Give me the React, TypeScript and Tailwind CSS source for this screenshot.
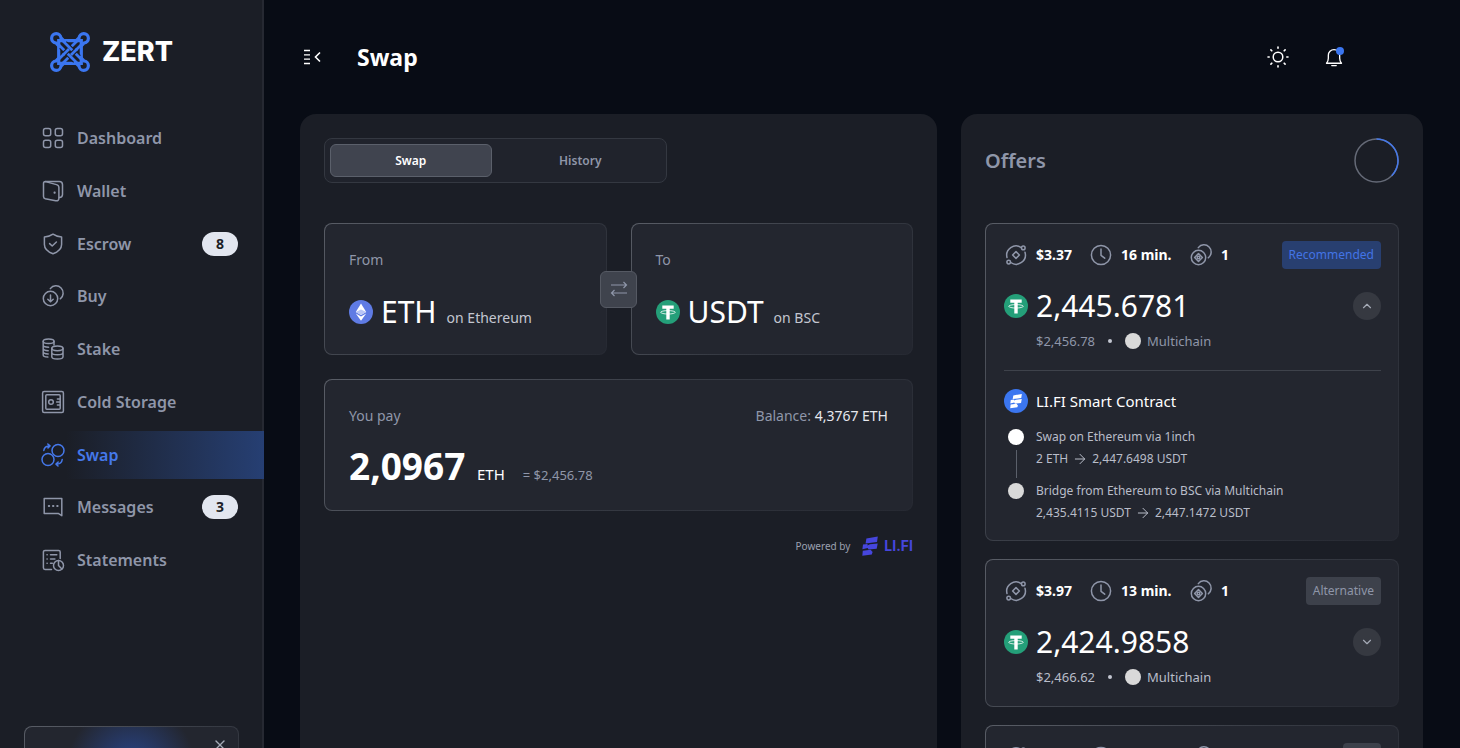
/**
 * Swap screen: sidebar, header, swap form and the list of offers
 */

import { useState } from 'react'
import type { ReactNode } from 'react'
import { ArrowRight, ChevronDown, ChevronUp, X } from 'lucide-react'

interface IconProps {
  children:   ReactNode
  className?: string
}

// Shared frame for the 24px line icons
function LineIcon({ children, className = 'w-6 h-6' }: IconProps) {
  return (
    <svg
      viewBox="0 0 24 24"
      fill="none"
      stroke="currentColor"
      strokeWidth="1.5"
      strokeLinecap="round"
      strokeLinejoin="round"
      aria-hidden="true"
      className={`shrink-0 ${className}`}
    >
      {children}
    </svg>
  )
}

const DashboardIcon = () => (
  <LineIcon>
    <rect x="2.5" y="2.5" width="7.2" height="7.2" rx="2" />
    <rect x="14.3" y="2.5" width="7.2" height="7.2" rx="2" />
    <rect x="2.5" y="14.3" width="7.2" height="7.2" rx="2" />
    <rect x="14.3" y="14.3" width="7.2" height="7.2" rx="2" />
  </LineIcon>
)

const WalletIcon = () => (
  <LineIcon>
    <path d="M4.5 2.6h13.8a3.2 3.2 0 0 1 3.2 3.2v9.6c0 1.8-1.2 3-3.2 3.2" />
    <path d="M4.5 2.6c-1.2 0-2 .9-2 2v12.8c0 1.3.7 2 1.8 2.3l10.4 2c2 .4 3.2-.6 3.2-2.4V8.6c0-1.6-.9-2.6-2.4-3L4.500 2.600Z" />
    <path d="M13.300 13.300h.6v.6h-.6z" />
  </LineIcon>
)

const ShieldIcon = () => (
  <LineIcon>
    <path d="M12 2.200c2.400 1.800 5.200 2.600 8.600 2.700v7.600c0 4.300-3.300 7.300-8.600 9.300-5.300-2-8.600-5-8.600-9.300V4.900c3.400-.1 6.200-.9 8.600-2.700Z" />
    <path d="m8.600 11.600 2.600 2.400 4.200-4" />
  </LineIcon>
)

const BuyIcon = () => (
  <LineIcon>
    <circle cx="9.500" cy="14.500" r="7.200" />
    <path d="M9.500 11v6.600M6.800 15.200l2.700 2.500 2.700-2.500" />
    <path d="M9.300 4.600a7.200 7.200 0 1 1 10 10.200" />
  </LineIcon>
)

const StakeIcon = () => (
  <LineIcon>
    <ellipse cx="7.600" cy="4.300" rx="5.400" ry="2.300" />
    <path d="M2.200 4.300v13.600c0 1.200 2 2 4.600 2.200M13 4.300v3.600M2.200 8c0 1.300 2.300 2.200 5.400 2.200M2.200 11.500c0 1.200 2.100 2.100 5 2.200M2.200 14.800c0 1.200 2.100 2.100 5 2.200" />
    <ellipse cx="16.400" cy="11.300" rx="5.600" ry="2.400" />
    <path d="M10.800 11.300v8.500c0 1.300 2.500 2.300 5.600 2.300s5.600-1 5.600-2.300v-8.500M10.800 15.500c0 1.300 2.500 2.300 5.600 2.300s5.600-1 5.600-2.300" />
  </LineIcon>
)

const SafeIcon = () => (
  <LineIcon>
    <rect x="1.600" y="1.600" width="20.800" height="20.800" rx="1.500" />
    <rect x="4.800" y="4.800" width="14.400" height="14.400" rx="1" />
    <circle cx="10" cy="12" r="2.300" />
    <path d="M16.400 9h2.800M15.600 12h3.600M16.400 15h2.800" />
  </LineIcon>
)

const SwapIcon = () => (
  <LineIcon>
    <circle cx="7" cy="16.500" r="6" />
    <circle cx="17" cy="7.500" r="6" />
    <path d="M2.800 7.500c.3-3 2.300-4.600 6-4.600M6.800 1l2.200 1.900-2 2" />
    <path d="M21.200 16.500c-.3 3-2.300 4.600-6 4.600M17.200 19l-2.200 2.100 2 1.900" />
  </LineIcon>
)

const MessageIcon = () => (
  <LineIcon>
    <path d="M3.200 3.500h17.600v17.200l-3.600-2.300h-14z" />
    <path d="M7.800 11h.4M12 11h.4M16.200 11h.4" strokeWidth="2" />
  </LineIcon>
)

const StatementIcon = () => (
  <LineIcon>
    <path d="M10.500 21.400H4a1.600 1.600 0 0 1-1.600-1.600V4A1.600 1.600 0 0 1 4 2.400h13.600a1.600 1.600 0 0 1 1.600 1.600v6.400" />
    <path d="M9.500 6.800h6.300M9.500 11h4.400M9.500 15.200h1.800M6 6.800h.2M6 11h.2M6 15.200h.2" />
    <circle cx="17.500" cy="17.500" r="5" />
    <path d="M17.500 12.600v4.900l3.400 3.500" />
  </LineIcon>
)

const GasIcon = () => (
  <LineIcon>
    <path d="M17.300 4.600A9.300 9.300 0 0 0 3 14.500M21 9.300A9.300 9.300 0 0 1 6.700 19.500" />
    <circle cx="19.300" cy="4.900" r="1.800" />
    <circle cx="4.700" cy="19.100" r="1.800" />
    <path d="m12 8.600 3.400 3.400-3.400 3.400L8.600 12z" />
  </LineIcon>
)

const ClockIcon = () => (
  <LineIcon>
    <circle cx="12" cy="12" r="9.600" />
    <path d="M12 6v6.300l3.700 2.900" />
  </LineIcon>
)

const StepsIcon = () => (
  <LineIcon>
    <circle cx="9.500" cy="14.500" r="7.200" />
    <path d="m9.500 10.600 3.900 3.900-3.900 3.900-3.900-3.900z" />
    <circle cx="9.500" cy="14.500" r="1.300" />
    <path d="M9.300 4.600a7.200 7.200 0 1 1 10 10.200" />
  </LineIcon>
)

// Two pairs of woven diagonals, tied together by a loop at each corner
const Logo = () => (
  <svg viewBox="0 0 40 40" fill="none" className="w-10 h-10 shrink-0" aria-hidden="true">
    <g stroke="#3b76f0" strokeWidth="3.200">
      <path d="M8.700 8.700h22.600v22.600H8.700z" />
      <path d="M26 9l3-3a4.700 4.700 0 1 1 5 5L31 14" />
      <path d="M14 9 11 6a4.700 4.700 0 1 0-5 5L9 14" />
      <path d="M26 31l3 3a4.700 4.700 0 1 0 5-5L31 26" />
      <path d="M14 31l-3 3a4.700 4.700 0 1 1-5-5L9 26" />
      <path d="M27 9 9 27M31 13 13 31" strokeWidth="2.800" />
    </g>
    <path d="m15 11 14 14M11 15l14 14" stroke="#1b1e26" strokeWidth="5" />
    <path d="m13 9 18 18M9 13l18 18" stroke="#3b76f0" strokeWidth="2.800" />
    <path d="m18 18-4 4M26 18l-4 4" stroke="#1b1e26" strokeWidth="5" />
    <path d="m19 17-6 6M27 17l-6 6" stroke="#3b76f0" strokeWidth="2.800" />
  </svg>
)

const LifiMark = ({ className }: { className: string }) => (
  <svg viewBox="0 0 16 20" fill="currentColor" className={className} aria-hidden="true">
    <path d="M4.400 2.600 15.800.5 15 6 3.600 7.400z" />
    <path d="M1 8.500 5.600 8 5.400 9.400 8 8.300l7.700-.9-1 5.300-8.200.9-.8-1.500L.4 13.200z" />
    <path d="M.8 14.800l7.800-1 2 2.200L9.800 18.400.3 19.800z" />
  </svg>
)

const EthIcon = () => (
  <svg viewBox="0 0 24 24" className="w-6 h-6 shrink-0" aria-hidden="true">
    <circle cx="12" cy="12" r="12" fill="#5f7be4" />
    <path d="m12 3.500 5.200 8.500L12 15 6.800 12z" fill="#fff" />
    <path d="m12 9.600 5.200 2.400L12 15 6.800 12z" fill="#b9c6f6" />
    <path d="m6.800 13.500 5.200 3 5.200-3L12 20.700z" fill="#fff" />
  </svg>
)

const UsdtIcon = () => (
  <svg viewBox="0 0 24 24" className="w-6 h-6 shrink-0" aria-hidden="true">
    <circle cx="12" cy="12" r="12" fill="#249f79" />
    <path d="M6.300 5.500h11.400v3.200h-4v10.800h-3.400V8.700h-4z" fill="#fff" />
    <ellipse cx="12" cy="12.300" rx="7.300" ry="1.700" fill="none" stroke="#fff" strokeWidth=".8" />
  </svg>
)

interface NavItem {
  label:   string
  Icon:    () => ReactNode
  count?:  number
}

const NAV_ITEMS: NavItem[] = [
  { label: 'Dashboard',    Icon: DashboardIcon },
  { label: 'Wallet',       Icon: WalletIcon },
  { label: 'Escrow',       Icon: ShieldIcon, count: 8 },
  { label: 'Buy',          Icon: BuyIcon },
  { label: 'Stake',        Icon: StakeIcon },
  { label: 'Cold Storage', Icon: SafeIcon },
  { label: 'Swap',         Icon: SwapIcon },
  { label: 'Messages',     Icon: MessageIcon, count: 3 },
  { label: 'Statements',   Icon: StatementIcon },
]

interface Step {
  title: string
  from:  string
  to:    string
  dot:   string
}

interface OfferData {
  fee:    string
  time:   string
  steps:  number
  tag:    string
  amount: string
  usd:    string
  route?: Step[]
}

const OFFERS: OfferData[] = [
  {
    fee: '$3.37', time: '16 min.', steps: 1, tag: 'Recommended', amount: '2,445.6781', usd: '$2,456.78',
    route: [
      { title: 'Swap on Ethereum via 1inch', from: '2 ETH', to: '2,447.6498 USDT', dot: 'bg-white' },
      { title: 'Bridge from Ethereum to BSC via Multichain', from: '2,435.4115 USDT', to: '2,447.1472 USDT', dot: 'bg-[#d9d9d9]' },
    ],
  },
  { fee: '$3.97', time: '13 min.', steps: 1, tag: 'Alternative', amount: '2,424.9858', usd: '$2,466.62' },
]

// Card face with a border that fades towards the bottom right
const CARD = 'rounded-lg border border-transparent [background:linear-gradient(#23262f,#23262f)_padding-box,linear-gradient(135deg,#595d66,#373b44_50%,#262932)_border-box]'

function Sidebar() {
  return (
    <aside className="w-66 shrink-0 bg-[#1b1e26] border-r-2 border-[#262932] flex flex-col">
      <a href="#home" className="flex items-center gap-3 pl-[50px] pt-8">
        <Logo />
        <span className="font-['Inter',sans-serif] text-[27px] leading-10 font-extrabold text-white">ZERT</span>
      </a>

      <nav className="mt-[42px] h-[470px] shrink-0 flex flex-col justify-between">
        {NAV_ITEMS.map(({ label, Icon, count }) => {
          const active = label === 'Swap'
          return (
            <a
              key={label}
              href={`#${label}`}
              className={`h-12 flex items-center gap-3 pl-[41px] pr-6 text-base font-semibold ${
                active
                  ? 'text-[#4578ea] -mr-0.5 bg-linear-to-r from-transparent from-25% to-[#263f73]'
                  : 'text-[#8f96a9]'
              }`}
            >
              <Icon />
              {label}
              {count && (
                <span className="ml-auto w-9 h-6 rounded-full bg-[#e2e6ef] text-[#1b1e26] text-sm font-bold flex items-center justify-center">
                  {count}
                </span>
              )}
            </a>
          )
        })}
      </nav>

      <div className="mt-[142px] ml-6 mr-[23px] h-40 shrink-0 rounded-lg border border-transparent flex justify-end items-start p-2.5 [background:radial-gradient(circle_at_50%_40px,#29468c,transparent_64px)_padding-box,linear-gradient(#23262f,#23262f)_padding-box,linear-gradient(135deg,#595d66,#373b44_50%,#262932)_border-box]">
        <button aria-label="Close" className="text-[#a5aab6]">
          <X className="w-4 h-4" strokeWidth={2} />
        </button>
      </div>
    </aside>
  )
}

function Header() {
  return (
    <header className="h-[114px] shrink-0 flex items-center text-white pl-1 pr-[79px]">
      <button aria-label="Collapse menu">
        <svg viewBox="0 0 18 16" fill="none" stroke="currentColor" className="w-[18px] h-4">
          <path d="M0 1.500h6M0 5.800h6M0 10.200h6M0 14.500h6" strokeWidth="1.300" />
          <path d="m16 3.500-4.500 4.500 4.500 4.500" strokeWidth="1.600" />
        </svg>
      </button>
      <h1 className="ml-[35px] text-[23px] leading-8 font-bold">Swap</h1>
      <div className="ml-auto flex items-center gap-[34px]">
        <button aria-label="Theme">
          <LineIcon>
            <circle cx="12" cy="12" r="4.800" />
            <path d="M12 2v1.200M12 20.800V22M2 12h1.200M20.800 12H22M4.900 4.900l.9.9M18.200 18.200l.9.9M4.900 19.100l.9-.9M18.200 5.800l.9-.9" strokeWidth="1.600" />
          </LineIcon>
        </button>
        <button aria-label="Notifications" className="relative">
          <LineIcon className="w-5 h-6">
            <path d="M3 19.500h18c-1.500-1.700-2.200-3.300-2.200-6V10a6.800 6.800 0 0 0-13.600 0v3.500c0 2.700-.7 4.300-2.200 6ZM9.300 22.300h5.400" strokeWidth="1.600" />
          </LineIcon>
          <span className="absolute top-0.5 right-0 w-2 h-2 rounded-full bg-[#3b76f0]" />
        </button>
      </div>
    </header>
  )
}

function SwapForm() {
  const [tab, setTab]       = useState('Swap')
  const [amount, setAmount] = useState('2,0967')

  return (
    <section className="flex-1 min-w-0 rounded-t-2xl bg-[#1b1e26] p-6">
      <div role="tablist" className="w-[343px] max-w-full h-[45px] p-[5px] grid grid-cols-2 gap-2 rounded-lg border border-[#343841] bg-[#20232c]">
        {['Swap', 'History'].map(name => (
          <button
            key={name}
            role="tab"
            aria-selected={tab === name}
            onClick={() => setTab(name)}
            className={`rounded-md border text-xs font-semibold ${
              tab === name
                ? 'bg-[#40444f] border-[#5b606b] text-white'
                : 'border-transparent text-[#8f96a9]'
            }`}
          >
            {name}
          </button>
        ))}
      </div>

      <div className="relative mt-10 grid grid-cols-2 gap-6">
        <div className={`${CARD} h-[132px] px-6 pt-6`}>
          <p className="text-sm leading-6 text-[#8f96a9]">From</p>
          <div className="mt-5 flex items-center gap-2">
            <EthIcon />
            <p className="flex items-baseline gap-2.5 text-[30px] leading-10 text-white">
              ETH <span className="text-sm text-[#c3c7d1]">on Ethereum</span>
            </p>
          </div>
        </div>
        <div className={`${CARD} h-[132px] px-6 pt-6`}>
          <p className="text-sm leading-6 text-[#8f96a9]">To</p>
          <div className="mt-5 flex items-center gap-2">
            <UsdtIcon />
            <p className="flex items-baseline gap-2.5 text-[30px] leading-10 text-white">
              USDT <span className="text-sm text-[#c3c7d1]">on BSC</span>
            </p>
          </div>
        </div>
        <button
          aria-label="Switch direction"
          className="absolute inset-0 m-auto w-[37px] h-[37px] rounded-md border border-[#555963] bg-[#3f434d] text-[#8f96a9] flex items-center justify-center"
        >
          <svg viewBox="0 0 18 16" fill="none" stroke="currentColor" strokeWidth="1.200" className="w-[18px] h-4">
            <path d="M1 4h15.500M13.500 1l3 3-3 3M17 12H1.500M4.500 9l-3 3 3 3" />
          </svg>
        </button>
      </div>

      <div className={`${CARD} mt-6 h-[132px] px-6 pt-6`}>
        <div className="flex justify-between text-sm leading-6 text-[#8f96a9]">
          <label htmlFor="pay">You pay</label>
          <p>Balance: <span className="text-[#e6e8ee]">4,3767 ETH</span></p>
        </div>
        <div className="mt-3 flex items-baseline text-[#8f96a9]">
          <input
            id="pay"
            value={amount}
            onChange={e => setAmount(e.target.value)}
            className="w-[118px] bg-transparent text-[37px] leading-[52px] font-bold text-white outline-none"
          />
          <span className="ml-2.5 text-[15px] text-white">ETH</span>
          <span className="ml-[18px] text-[13px]">= $2,456.78</span>
        </div>
      </div>

      <p className="mt-[25px] flex items-center justify-end text-[10px] text-[#9ba1b0]">
        Powered by
        <LifiMark className="ml-3 mr-1.5 w-4 h-5 text-[#4646dd]" />
        <span className="font-['Inter',sans-serif] text-sm font-bold text-[#4646dd]">LI.FI</span>
      </p>
    </section>
  )
}

function Offer({ offer }: { offer: OfferData }) {
  const [open, setOpen] = useState(Boolean(offer.route))
  const best  = offer.tag === 'Recommended'
  const muted = best ? 'text-[#8f96a9]' : 'text-[#b9bdc9]'

  return (
    <article className={`${CARD} shrink-0 pl-[18px] pr-[17px] pt-[17px] ${open ? 'pb-[18px]' : 'pb-5'}`}>
      <div className="flex items-center text-sm font-bold text-white">
        <span className="w-[85px] flex items-center gap-2"><i className="text-[#8f96a9]"><GasIcon /></i>{offer.fee}</span>
        <span className="w-[100px] flex items-center gap-2"><i className="text-[#8f96a9]"><ClockIcon /></i>{offer.time}</span>
        <span className="flex items-center gap-2"><i className="text-[#8f96a9]"><StepsIcon /></i>{offer.steps}</span>
        <span className={`ml-auto h-7 px-[7px] rounded text-xs font-normal flex items-center ${
          best ? 'bg-[#283f70] text-[#4374e6]' : 'bg-[#3d414b] text-[#8f96a9]'
        }`}
        >
          {offer.tag}
        </span>
      </div>

      <div className="mt-[17px] flex items-center gap-2">
        <UsdtIcon />
        <p className="text-[30px] leading-10 text-white">{offer.amount}</p>
        <button
          aria-label="Toggle details"
          onClick={() => setOpen(o => !o)}
          className="ml-auto w-7 h-7 rounded-full bg-[#363941] text-[#a5aab6] flex items-center justify-center"
        >
          {open ? <ChevronUp className="w-3.5 h-3.5" /> : <ChevronDown className="w-3.5 h-3.5" />}
        </button>
      </div>

      <p className={`mt-1.5 pl-8 flex items-center text-[13px] leading-[18px] ${muted}`}>
        {offer.usd}
        <span className="mx-[13px] w-1 h-1 rounded-full bg-[#c3c7d1]" />
        <span className="mr-1.5 w-4 h-4 rounded-full bg-[#d9d9d9]" />
        Multichain
      </p>

      {open && offer.route && (
        <div className="mt-5 border-t border-[#3e424b] pt-[18px]">
          <div className="flex items-center gap-2 text-[15px] leading-6 text-white">
            <span className="w-6 h-6 rounded-full bg-[#3b76f0] flex items-center justify-center">
              <LifiMark className="w-3 h-4" />
            </span>
            LI.FI Smart Contract
          </div>
          <ol className="mt-[15px] flex flex-col gap-3.5 text-xs leading-[18px] text-[#b9bdc9]">
            {offer.route.map((step, i) => (
              <li key={step.title} className="relative flex gap-3 pl-1">
                <span className={`mt-px w-4 h-4 shrink-0 rounded-full ${step.dot}`} />
                {i < offer.route!.length - 1 && (
                  <span className="absolute left-3 top-[22px] w-px h-7 bg-[#5b606b]" />
                )}
                <div>
                  <p>{step.title}</p>
                  <p className="mt-1 flex items-center gap-1">
                    {step.from}
                    <ArrowRight className="w-4 h-4" strokeWidth={1.5} />
                    {step.to}
                  </p>
                </div>
              </li>
            ))}
          </ol>
        </div>
      )}
    </article>
  )
}

// Placeholder for the offer that is still loading below the fold
function PendingOffer() {
  return (
    <article className={`${CARD} h-[148px] shrink-0 pl-[18px] pr-[17px] pt-[17px]`}>
      <div className="flex items-center text-[#8f96a9]">
        <span className="w-[85px]"><GasIcon /></span>
        <span className="w-[100px]"><ClockIcon /></span>
        <StepsIcon />
        <span className="ml-auto w-[38px] h-7 rounded bg-[#3d414b]" />
      </div>
    </article>
  )
}

function Offers() {
  return (
    <section className="w-[462px] shrink-0 rounded-t-2xl bg-[#1b1e26] px-6 pt-6 flex flex-col">
      <div className="flex items-center justify-between">
        <h2 className="text-xl font-semibold text-[#8f96a9]">Offers</h2>
        <svg viewBox="0 0 45 45" fill="none" strokeWidth="1.500" className="w-[45px] h-[45px]" role="img" aria-label="Refreshing">
          <circle cx="22.500" cy="22.500" r="21.500" stroke="#656a77" />
          <path d="M22.500 1a21.500 21.500 0 0 1 15.200 36.700" stroke="#4578ea" />
        </svg>
      </div>
      <div className="mt-10 flex flex-col gap-[18px]">
        {OFFERS.map(o => <Offer key={o.amount} offer={o} />)}
        <PendingOffer />
      </div>
    </section>
  )
}

export default function App() {
  return (
    <div className="h-screen overflow-hidden flex bg-[#080c15] font-['Noto_Sans',sans-serif]">
      <Sidebar />
      <main className="flex-1 min-w-0 flex flex-col pl-9 pr-[37px]">
        <Header />
        <div className="flex-1 min-h-0 flex gap-6">
          <SwapForm />
          <Offers />
        </div>
      </main>
    </div>
  )
}
